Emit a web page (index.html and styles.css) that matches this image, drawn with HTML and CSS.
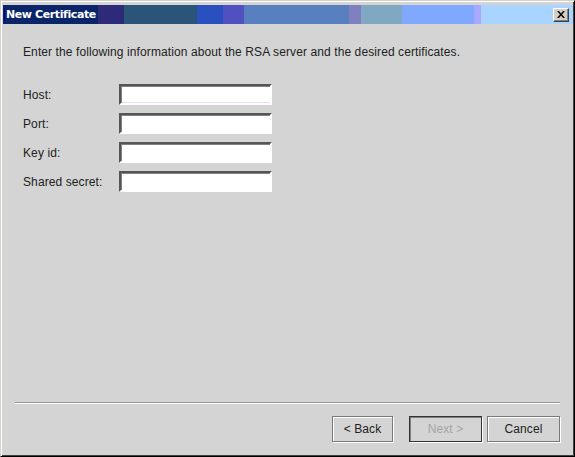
FILE: index.html
```html
<!DOCTYPE html>
<html lang="en">
  <head>
    <meta charset="UTF-8" />
    <title>New Certificate</title>
    <link rel="stylesheet" href="styles.css">
  </head>
  <body>
    <div class="dialog">
      <div class="title-bar">
        <span class="title-text">New Certificate</span>
        <button class="close-btn" type="button" aria-label="Close">
          <svg width="8" height="7" viewBox="0 0 8 7">
            <path d="M0 0h2l2 2.5L6 0h2L5 3.5 8 7H6L4 4.5 2 7H0l3-3.5z" fill="#000" />
          </svg>
        </button>
      </div>

      <div class="dialog-body">
        <p class="intro">Enter the following information about the RSA server and the desired certificates.</p>

        <form class="cert-form">
          <label for="host">Host:</label>
          <input type="text" id="host" class="field field--focus" />

          <label for="port">Port:</label>
          <input type="text" id="port" class="field" />

          <label for="key-id">Key id:</label>
          <input type="text" id="key-id" class="field" />

          <label for="secret">Shared secret:</label>
          <input type="text" id="secret" class="field" />
        </form>

        <div class="separator"></div>

        <div class="button-row">
          <button type="button" class="btn">&lt; Back</button>
          <button type="button" class="btn btn--default" disabled>Next &gt;</button>
          <button type="button" class="btn">Cancel</button>
        </div>
      </div>
    </div>
  </body>
</html>
```

FILE: styles.css
```css
* {
  box-sizing: border-box;
  margin: 0;
  padding: 0;
}

html,
body {
  height: 100%;
  overflow: hidden;
}

body {
  font-family: "Liberation Sans", Arial, sans-serif;
  background-color: #ffffff;
  display: flex;
}

.dialog {
  flex-grow: 1;
  display: flex;
  flex-direction: column;
  background-color: #d4d4d4;
  border-top: 1px solid #d4d0c8;
  border-left: 1px solid #d4d0c8;
  border-right: 1px solid #000000;
  border-bottom: 1px solid #000000;
  box-shadow: inset 1px 1px #ffffff, inset -1px -1px #404040;
  padding: 3px 1px 2px 2px;
}

/* odd banded title bar from the screenshot */
.title-bar {
  height: 19px;
  flex-shrink: 0;
  display: flex;
  align-items: center;
  justify-content: space-between;
  padding: 0 4px 0 1px;
  margin-top: 1px;
  background: linear-gradient(
    to right,
    #0a246a 0 95px,
    #2e2a7a 95px 121px,
    #2a5478 121px 194px,
    #2a50c0 194px 220px,
    #5050c0 220px 241px,
    #5880c0 241px 346px,
    #8080c0 346px 358px,
    #80a8c0 358px 399px,
    #80a8ff 399px 471px,
    #a8a8ff 471px 478px,
    #a8d4ff 478px
  );
}

.title-text {
  font-family: "DejaVu Sans", Tahoma, sans-serif;
  font-weight: 700;
  font-size: 11px;
  letter-spacing: -0.4px;
  color: #ffffff;
  padding-left: 1px;
  border-left: 1px solid #000080;
}

.close-btn {
  width: 16px;
  height: 14px;
  display: flex;
  align-items: center;
  justify-content: center;
  background-color: #d4d0c8;
  border: 1px solid;
  border-color: #ffffff #404040 #404040 #ffffff;
  box-shadow: inset -1px -1px #808080;
}

.dialog-body {
  flex-grow: 1;
  display: flex;
  flex-direction: column;
  padding: 21px 13px 12px 12px;
  font-size: 12px;
  color: #222222;
  letter-spacing: 0.1px;
}

.intro {
  padding-left: 8px;
  line-height: 14px;
}

.cert-form {
  display: grid;
  grid-template-columns: 96px 153px;
  grid-auto-rows: 21px;
  row-gap: 8px;
  align-items: center;
  margin-top: 25px;
  padding-left: 8px;
}

.cert-form label {
  line-height: 14px;
}

.field {
  height: 21px;
  width: 100%;
  background-color: #ffffff;
  border: 2px solid;
  border-color: #555555 #ffffff #ffffff #555555;
  box-shadow: inset 1px 1px #808080;
  font-family: "Liberation Sans", Arial, sans-serif;
  font-size: 12px;
  outline: none;
}

.field--focus {
  box-shadow: inset 1px 1px #808080, inset 0 -1px #f2d6f2;
}

.separator {
  margin-top: auto;
  height: 2px;
  border-top: 1px solid #999999;
  border-bottom: 1px solid #ffffff;
}

.button-row {
  display: flex;
  justify-content: flex-end;
  gap: 5px;
  margin-top: 12px;
}

.btn {
  height: 26px;
  padding: 0;
  font-family: "Liberation Sans", Arial, sans-serif;
  font-size: 12px;
  letter-spacing: 0.1px;
  color: #222222;
  background-color: #d4d4d4;
  border: 1px solid #7a7a7a;
  box-shadow: inset 1px 1px #ffffff, 1px 1px #ffffff;
  width: 61px;
}

.btn--default {
  width: 73px;
  border-color: #333333;
  box-shadow: inset 1px 1px #808080, 1px 1px #ffffff;
  color: #a4a4a4;
  margin-left: 11px;
}

.btn:last-child {
  width: 73px;
}
```
